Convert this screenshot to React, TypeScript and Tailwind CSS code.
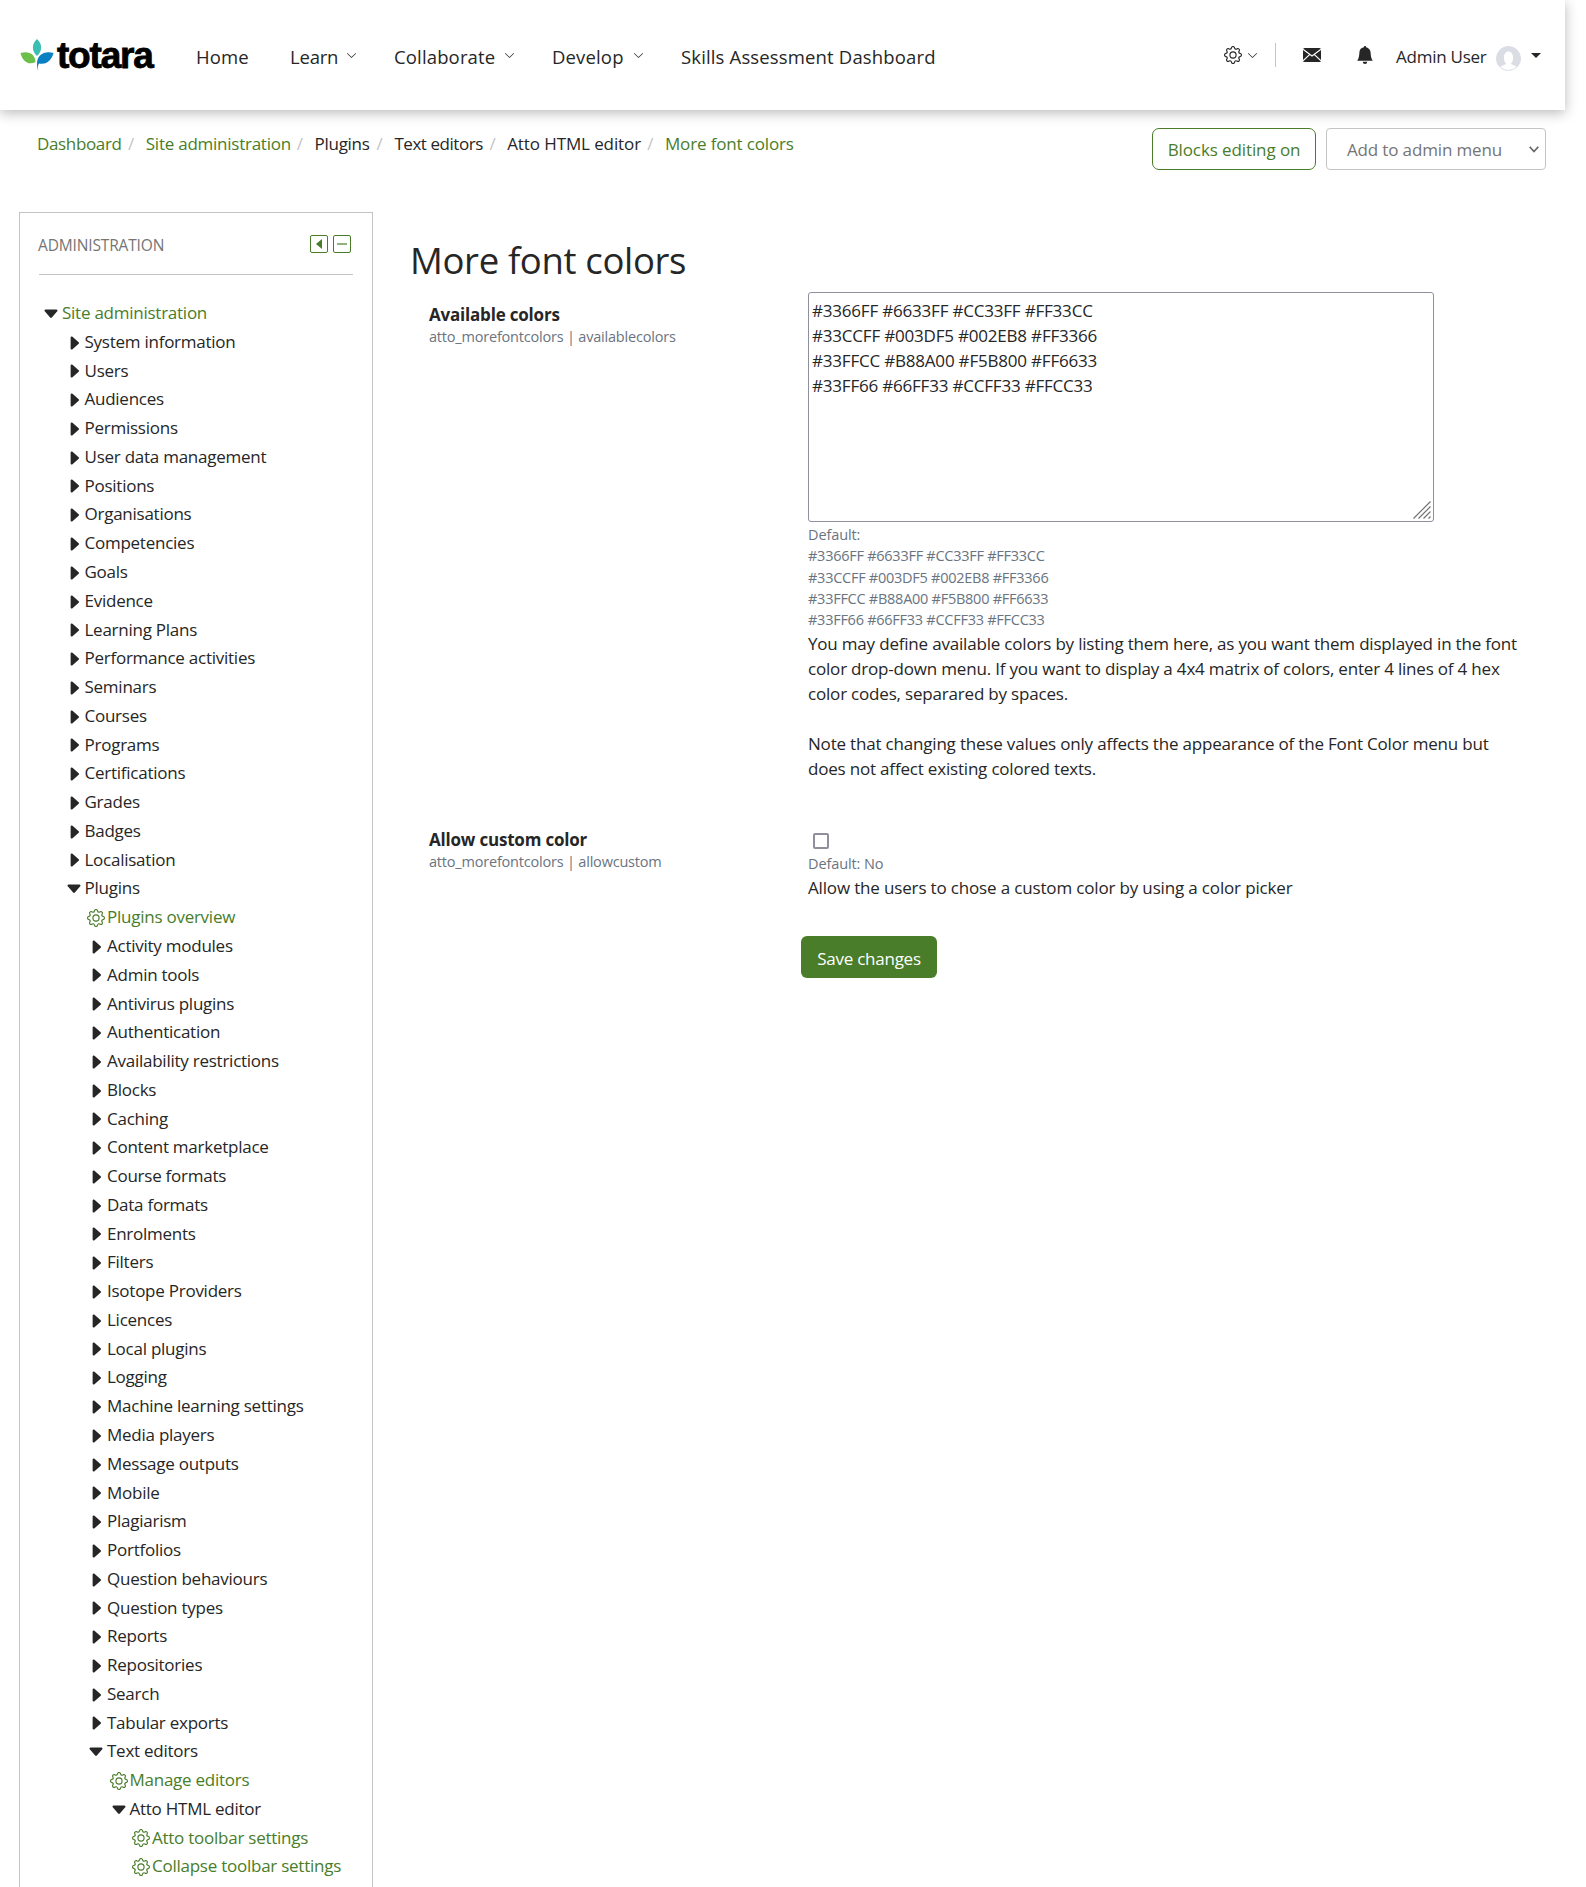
import React from "react";
import {
  BsBellFill,
  BsCaretDownFill,
  BsCaretRightFill,
  BsChevronDown,
  BsGear,
} from "react-icons/bs";

type Kind = "open" | "closed" | "link" | "root";
type Node = [level: number, kind: Kind, label: string];

const closed = (level: number, labels: string[]): Node[] =>
  labels.map((label) => [level, "closed", label]);

const tree: Node[] = [
  [0, "root", "Site administration"],
  ...closed(1, [
    "System information",
    "Users",
    "Audiences",
    "Permissions",
    "User data management",
    "Positions",
    "Organisations",
    "Competencies",
    "Goals",
    "Evidence",
    "Learning Plans",
    "Performance activities",
    "Seminars",
    "Courses",
    "Programs",
    "Certifications",
    "Grades",
    "Badges",
    "Localisation",
  ]),
  [1, "open", "Plugins"],
  [2, "link", "Plugins overview"],
  ...closed(2, [
    "Activity modules",
    "Admin tools",
    "Antivirus plugins",
    "Authentication",
    "Availability restrictions",
    "Blocks",
    "Caching",
    "Content marketplace",
    "Course formats",
    "Data formats",
    "Enrolments",
    "Filters",
    "Isotope Providers",
    "Licences",
    "Local plugins",
    "Logging",
    "Machine learning settings",
    "Media players",
    "Message outputs",
    "Mobile",
    "Plagiarism",
    "Portfolios",
    "Question behaviours",
    "Question types",
    "Reports",
    "Repositories",
    "Search",
    "Tabular exports",
  ]),
  [2, "open", "Text editors"],
  [3, "link", "Manage editors"],
  [3, "open", "Atto HTML editor"],
  [4, "link", "Atto toolbar settings"],
  [4, "link", "Collapse toolbar settings"],
];

const indent = ["pl-0", "pl-[22.5px]", "pl-[45px]", "pl-[67.5px]", "pl-[90px]"];

function TreeRow({ node }: { node: Node }) {
  const [level, kind, label] = node;
  const green = kind === "link" || kind === "root";
  return (
    <li className={`flex h-[28.77px] items-center ${indent[level]}`}>
      <span className="flex w-[22px] shrink-0 items-center justify-center pt-[2px]">
        {kind === "closed" && <BsCaretRightFill className="h-[18px] w-[18px]" />}
        {(kind === "open" || kind === "root") && <BsCaretDownFill className="h-[18px] w-[18px]" />}
        {kind === "link" && <BsGear className="h-[18px] w-[18px] text-[#497d29]" />}
      </span>
      <span className={green ? "text-[#497d29]" : ""}>{label}</span>
    </li>
  );
}

function Logo() {
  return (
    <div className="flex h-[34px] w-[176px] items-center">
      <svg viewBox="0 0 34 33" className="h-[33px] w-[34px] shrink-0">
        <path d="M17 0C22.500 5 22.500 12 17 17C11.500 12 11.500 5 17 0Z" fill="#3bbfb2" />
        <path d="M.5 14C9 11.500 15 15 15.500 23C8 27 2 21.500 .5 14Z" fill="#6cc04a" />
        <path d="M33.500 14C25 11.500 17 15 17 25L17.300 32C17.800 28 18 26 19 24.500C27 26.500 32 20 33.500 14Z" fill="#0a7fc2" />
      </svg>
      <span className="ml-[3px] pt-[2px] font-['Liberation_Sans',sans-serif] text-[37px] leading-[34px] font-bold tracking-[-1.2px] text-black [-webkit-text-stroke:0.8px_black]">
        totara
      </span>
    </div>
  );
}

function NavItem({ label, cls, menu }: { label: string; cls: string; menu?: boolean }) {
  return (
    <a className={`flex shrink-0 items-center justify-between whitespace-nowrap ${cls}`}>
      <span>{label}</span>
      {menu && <BsChevronDown className="mb-[2px] h-[11px] w-[11px]" />}
    </a>
  );
}

function Header() {
  return (
    <header className="flex h-[110px] w-[1565px] items-center bg-white pl-5 shadow-[0_3px_12px_rgba(0,0,0,0.28)]">
      <Logo />
      <nav className="flex h-7 items-center pt-[3px] text-[18.5px] tracking-[0.15px]">
        <NavItem label="Home" cls="w-[94px]" />
        <NavItem label="Learn" cls="w-[67px] mr-[37px] tracking-[-0.2px]" menu />
        <NavItem label="Collaborate" cls="w-[121px] mr-[37px]" menu />
        <NavItem label="Develop" cls="w-[92px] mr-[37px]" menu />
        <NavItem label="Skills Assessment Dashboard" cls="w-[260px]" />
      </nav>
      <div className="ml-auto flex h-7 items-center">
        <BsGear className="h-[18px] w-[18px]" />
        <BsChevronDown className="ml-[5px] h-[11px] w-[11px]" />
        <span className="ml-[17px] h-6 w-px bg-[#c4c4c4]" />
        <svg viewBox="0 0 18 14" className="ml-[27px] h-[14px] w-[18px]">
          <rect width="18" height="14" rx="1.500" fill="#262626" />
          <path d="M0 1.200L9 8L18 1.200M0 12.800L6.600 6.600M18 12.800L11.400 6.600" fill="none" stroke="#fff" strokeWidth="1.100" />
        </svg>
        <BsBellFill className="ml-[35px] h-[18px] w-[18px]" />
        <span className="ml-[22px] w-[100px] pt-[3px] text-[17px] tracking-[-0.25px] whitespace-nowrap">Admin User</span>
        <svg viewBox="0 0 25 25" className="mt-[6px] h-[25px] w-[25px]">
          <circle cx="12.500" cy="12.500" r="12" fill="#fff" stroke="#dadde3" />
          <path d="M12.500 .5A12 12 0 0 0 4 21C5 19.500 10 19 10 17.500C8 15.500 8 13 8 11C8 3.500 17 3.500 17 11C17 13 17 15.500 15 17.500C15 19 20 19.500 21 21A12 12 0 0 0 12.500 .5Z" fill="#dadde3" />
        </svg>
        <svg viewBox="0 0 10 5" className="mr-6 ml-[10px] h-[5px] w-[10px]">
          <path d="M0 0H10L5 5Z" fill="#262626" />
        </svg>
      </div>
    </header>
  );
}

const crumbs: [label: string, green: boolean, cls: string][] = [
  ["Dashboard", true, "w-[91px] tracking-[-0.35px]"],
  ["Site administration", true, "w-[151px] tracking-[-0.25px]"],
  ["Plugins", false, "w-[62px]"],
  ["Text editors", false, "w-[95px] tracking-[-0.45px]"],
  ["Atto HTML editor", false, "w-[140px] tracking-[-0.1px]"],
  ["More font colors", true, "w-[140px] tracking-[-0.15px]"],
];

function Breadcrumbs() {
  return (
    <ol className="flex leading-[26px] whitespace-nowrap">
      {crumbs.map(([label, green, cls], i) => (
        <li key={label} className="flex">
          <span className={`${cls} ${green ? "text-[#497d29]" : ""}`}>{label}</span>
          {i < crumbs.length - 1 && <span className="w-[17.8px] text-[#c4c4c4]">/</span>}
        </li>
      ))}
    </ol>
  );
}

const palette = [
  "#3366FF #6633FF #CC33FF #FF33CC",
  "#33CCFF #003DF5 #002EB8 #FF3366",
  "#33FFCC #B88A00 #F5B800 #FF6633",
  "#33FF66 #66FF33 #CCFF33 #FFCC33",
];

function SettingLabel({ title, name }: { title: string; name: string }) {
  return (
    <div className="w-[379px] shrink-0">
      <div className="text-[17px] leading-[25px] font-bold tracking-[-0.2px]">{title}</div>
      <div className="text-[14.5px] leading-[20px] tracking-[-0.2px] text-[#69747f]">{name}</div>
    </div>
  );
}

function Sidebar() {
  return (
    <aside className="h-[1675px] w-[354px] shrink-0 overflow-hidden border border-b-0 border-[#c4c4c4] px-[19px]">
      <div className="flex h-[62px] items-center border-b border-[#c4c4c4] pt-[4px]">
        <h2 className="-ml-px text-[15.5px] tracking-[-0.15px] text-[#757575]">ADMINISTRATION</h2>
        <div className="mr-[2px] ml-auto flex gap-[5px] pb-[3px] text-[#497d29]">
          <svg viewBox="0 0 18 18" className="h-[18px] w-[18px]">
            <rect x=".5" y=".5" width="17" height="17" rx="1.500" fill="none" stroke="currentColor" />
            <path d="M12 4V14L6 9Z" fill="currentColor" />
          </svg>
          <svg viewBox="0 0 18 18" className="h-[18px] w-[18px]">
            <rect x=".5" y=".5" width="17" height="17" rx="1.500" fill="none" stroke="currentColor" />
            <path d="M4 9H14" stroke="currentColor" strokeWidth="1.200" />
          </svg>
        </div>
      </div>
      <ul className="mt-[23.5px] ml-px tracking-[-0.25px] whitespace-nowrap">
        {tree.map((node, i) => (
          <TreeRow key={i} node={node} />
        ))}
      </ul>
    </aside>
  );
}

function Settings() {
  return (
    <main className="ml-[37px] pt-[22px]">
      <h1 className="h-[58px] text-[36.5px] leading-[52px] tracking-[-0.35px]">More font colors</h1>
      <section className="flex pl-[19px]">
        <div className="pt-[10px]">
          <SettingLabel title="Available colors" name="atto_morefontcolors | availablecolors" />
        </div>
        <div className="w-[726px]">
          <div className="relative h-[230px] w-[626px] rounded-[3px] border border-[#8f8f9d] px-[3px] pt-[5px] leading-[25px]">
            {palette.map((line) => (
              <div key={line} className="tracking-[-0.2px]">{line}</div>
            ))}
            <svg viewBox="0 0 18 18" className="absolute right-[2px] bottom-[2px] h-[18px] w-[18px]">
              <path d="M.5 17.500L17.500 .5M5.500 17.500L17.500 5.500M10.500 17.500L17.500 10.500M15.500 17.500L17.500 15.500" stroke="#737373" strokeWidth="1.200" />
            </svg>
          </div>
          <div className="pt-[2px] text-[14.5px] leading-[21.25px] tracking-[-0.26px] text-[#69747f]">
            <div className="tracking-[-0.1px]">Default:</div>
            {palette.map((line) => (
              <div key={line}>{line}</div>
            ))}
          </div>
          <div className="pt-px leading-[25px] tracking-[-0.19px] whitespace-nowrap">
            <p>You may define available colors by listing them here, as you want them displayed in the font</p>
            <p>color drop-down menu. If you want to display a 4x4 matrix of colors, enter 4 lines of 4 hex</p>
            <p>color codes, separared by spaces.</p>
            <p className="mt-[25px]">Note that changing these values only affects the appearance of the Font Color menu but</p>
            <p>does not affect existing colored texts.</p>
          </div>
        </div>
      </section>
      <section className="mt-[44px] flex pl-[19px]">
        <div className="pt-[2px]">
          <SettingLabel title="Allow custom color" name="atto_morefontcolors | allowcustom" />
        </div>
        <div>
          <div className="mt-[8px] ml-[5px] h-4 w-4 rounded-[2px] border-2 border-[#8f8f9d]" />
          <div className="mt-[5px] text-[14.5px] leading-[20px] tracking-[-0.1px] text-[#69747f]">Default: No</div>
          <p className="leading-[27px] tracking-[-0.16px] whitespace-nowrap">Allow the users to chose a custom color by using a color picker</p>
        </div>
      </section>
      <button className="mt-[35px] ml-[391px] block h-[42px] w-[136px] rounded-[6px] bg-[#497d29] pt-[2px] text-[17px] tracking-[-0.25px] text-white">
        Save changes
      </button>
    </main>
  );
}

export default function App() {
  return (
    <div className="h-[1887px] w-[1586px] overflow-hidden bg-white font-['Open_Sans','Noto_Sans',sans-serif] text-[17px] tracking-[-0.3px] text-[#262626]">
      <Header />
      <div className="flex h-[102px] items-start justify-between pt-[18px] pr-10 pl-[37px]">
        <div className="pt-[3px]">
          <Breadcrumbs />
        </div>
        <div className="flex gap-[10px]">
          <button className="h-[42px] w-[164px] rounded-[7px] border border-[#497d29] pt-px tracking-[-0.1px] text-[#497d29]">
            Blocks editing on
          </button>
          <div className="flex h-[42px] w-[220px] items-center justify-between rounded-[4px] border border-[#c4c4c4] pt-px pr-[6px] pl-5 text-[#757575]">
            <span className="tracking-[-0.15px]">Add to admin menu</span>
            <svg viewBox="0 0 10 7" className="h-[7px] w-[10px]">
              <path d="M.7 .8L5 5.500L9.300 .8" fill="none" stroke="#666" strokeWidth="1.700" />
            </svg>
          </div>
        </div>
      </div>
      <div className="flex pl-[19px]">
        <Sidebar />
        <Settings />
      </div>
    </div>
  );
}
